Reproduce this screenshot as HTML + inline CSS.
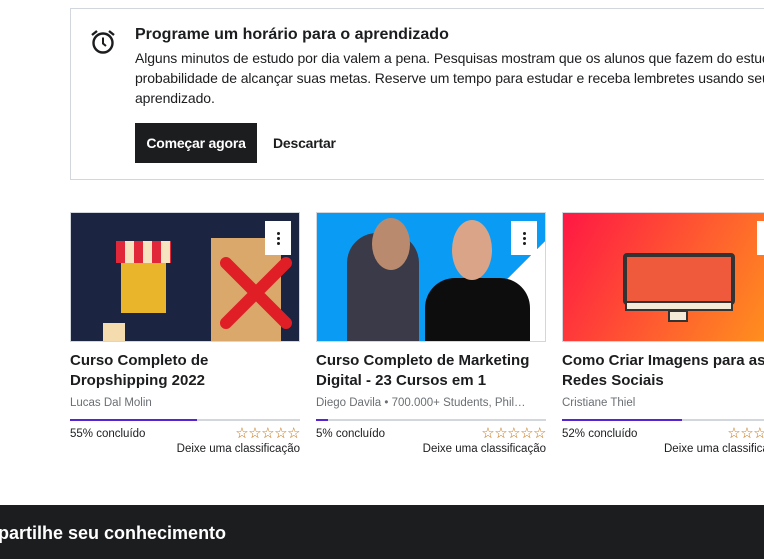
<!DOCTYPE html>
<html><head><meta charset="utf-8">
<style>
*{margin:0;padding:0;box-sizing:border-box}
html,body{width:764px;height:559px;overflow:hidden}
body{background:#fff;font-family:"Liberation Sans",sans-serif;color:#1c1d1f;position:relative}
.wrap{position:absolute;left:0;top:0;width:764px;height:559px;overflow:hidden}
.banner{position:absolute;left:70px;top:8px;width:720px;height:172px;border:1px solid #d1d7dc}
.banner h3{position:absolute;left:64px;top:17px;font-size:16px;font-weight:700;white-space:nowrap}
.banner p{position:absolute;left:64px;top:39px;font-size:14px;line-height:20px;width:640px;white-space:nowrap;letter-spacing:-0.1px}
.btn{position:absolute;left:64px;top:114px;width:122px;height:40px;background:#1c1d1f;color:#fff;font-weight:700;font-size:14px;line-height:40px;text-align:center;letter-spacing:-0.2px}
.dis{position:absolute;left:202px;top:114px;line-height:40px;font-weight:700;font-size:14px;letter-spacing:-0.2px}
.card{position:absolute;top:212px;width:230px}
.img{height:130px;border:1px solid #d1d7dc;position:relative;overflow:hidden}
.menu{position:absolute;right:8px;top:8px;width:26px;height:34px;background:#fff;display:flex;flex-direction:column;align-items:center;justify-content:center;gap:2px}
.menu i{width:3px;height:3px;border-radius:50%;background:#1c1d1f}
.t{margin-top:9px;font-size:15px;font-weight:700;line-height:20px}
.a{margin-top:5px;font-size:11.5px;color:#6a6f73;white-space:nowrap;overflow:hidden;line-height:14px}
.bar{margin-top:9px;height:2px;background:#d1d7dc;position:relative}
.bar b{position:absolute;left:0;top:0;height:2px;background:#5624d0}
.row{display:flex;justify-content:space-between;align-items:center;margin-top:6px;font-size:11.5px;white-space:nowrap;line-height:14px}
.st{color:#c4710e;font-size:15px;line-height:14px;letter-spacing:-0.5px}
.r{text-align:right;font-size:11.5px;margin-top:1px;white-space:nowrap;line-height:14px}
.foot{position:absolute;left:0;top:505px;width:764px;height:54px;background:#1c1d1f;color:#fff;font-size:18px;font-weight:700}
</style></head><body><div class="wrap">
<div class="banner">
<svg style="position:absolute;left:18px;top:19px" width="28" height="28" viewBox="0 0 28 28" fill="none" stroke="#1c1d1f" stroke-width="2.4"><circle cx="14" cy="15" r="9.5"/><path d="M14 9.5v6l3 2.5" stroke-width="2"/><path d="M3 7l5-4M25 7l-5-4"/></svg>
<h3>Programe um horário para o aprendizado</h3>
<p>Alguns minutos de estudo por dia valem a pena. Pesquisas mostram que os alunos que fazem do estudo um hábito têm mais<br>probabilidade de alcançar suas metas. Reserve um tempo para estudar e receba lembretes usando seu programador de<br>aprendizado.</p>
<div class="btn">Começar agora</div>
<div class="dis">Descartar</div>
</div>

<div class="card" style="left:70px">
<div class="img" style="background:#1b2440">
<div style="position:absolute;left:50px;top:30px;width:45px;height:70px;background:#e9b52a"></div>
<div style="position:absolute;left:45px;top:28px;width:55px;height:22px;background:repeating-linear-gradient(90deg,#e0283a 0 9px,#f6e3c0 9px 18px)"></div>
<div style="position:absolute;left:140px;top:25px;width:70px;height:104px;background:#d9a86a"></div>
<svg style="position:absolute;left:145px;top:40px" width="80" height="80"><path d="M10 10L70 70M70 10L10 70" stroke="#e01e25" stroke-width="12" stroke-linecap="round"/></svg>
<div style="position:absolute;left:32px;top:110px;width:22px;height:20px;background:#f4dcae"></div>
<div class="menu"><i></i><i></i><i></i></div></div>
<div class="t">Curso Completo de<br>Dropshipping 2022</div>
<div class="a">Lucas Dal Molin</div>
<div class="bar"><b style="width:55%"></b></div>
<div class="row"><span>55% concluído</span><span class="st">☆☆☆☆☆</span></div>
<div class="r">Deixe uma classificação</div>
</div>

<div class="card" style="left:316px">
<div class="img" style="background:linear-gradient(135deg,#0a9cf5 0 72%,#fff 72%)">
<div style="position:absolute;left:30px;top:20px;width:72px;height:110px;background:#3a3a48;border-radius:30px 30px 0 0"></div>
<div style="position:absolute;left:55px;top:5px;width:38px;height:52px;background:#b98a6e;border-radius:50%"></div>
<div style="position:absolute;left:108px;top:65px;width:105px;height:65px;background:#0d0d0d;border-radius:30px 30px 0 0"></div>
<div style="position:absolute;left:135px;top:7px;width:40px;height:60px;background:#d9a488;border-radius:50%"></div>
<div class="menu"><i></i><i></i><i></i></div></div>
<div class="t">Curso Completo de Marketing<br>Digital - 23 Cursos em 1</div>
<div class="a">Diego Davila • 700.000+ Students, Phil…</div>
<div class="bar"><b style="width:5%"></b></div>
<div class="row"><span>5% concluído</span><span class="st">☆☆☆☆☆</span></div>
<div class="r">Deixe uma classificação</div>
</div>

<div class="card" style="left:562px">
<div class="img" style="background:linear-gradient(120deg,#ff1744,#ff5a30 50%,#ff9a1a)">
<div style="position:absolute;left:60px;top:40px;width:112px;height:52px;background:#f05a3c;border:4px solid #333;border-radius:4px"></div>
<div style="position:absolute;left:62px;top:88px;width:108px;height:10px;background:#f3ead8;border:2px solid #333"></div>
<div style="position:absolute;left:105px;top:97px;width:20px;height:12px;background:#f3ead8;border:2px solid #333"></div>
<div class="menu"><i></i><i></i><i></i></div></div>
<div class="t">Como Criar Imagens para as<br>Redes Sociais</div>
<div class="a">Cristiane Thiel</div>
<div class="bar"><b style="width:52%"></b></div>
<div class="row"><span>52% concluído</span><span class="st">☆☆☆☆☆</span></div>
<div class="r" style="margin-left:102px;text-align:left">Deixe uma classificação</div>
</div>

<div class="foot"><span style="position:absolute;left:-2px;top:18px">partilhe seu conhecimento</span></div>
</div></body></html>
